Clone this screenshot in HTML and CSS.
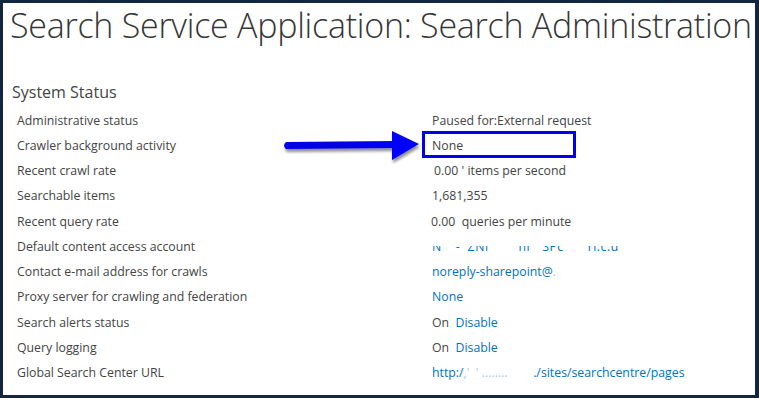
FILE: index.html
```html
<!DOCTYPE html>
<html>
<head>
<meta charset="utf-8">
<link rel="stylesheet" href="styles.css">
</head>
<body>
<div class="frame">
  <h1 class="title">Search Service Application: Search Administration</h1>
  <h2 class="section">System Status</h2>
  <div class="status">
    <div class="label">Administrative status</div>
    <div class="value">Paused for:External request</div>
    <div class="label">Crawler background activity</div>
    <div class="value">None</div>
    <div class="label">Recent crawl rate</div>
    <div class="value shift">0.00 ' items per second</div>
    <div class="label">Searchable items</div>
    <div class="value">1,681,355</div>
    <div class="label">Recent query rate</div>
    <div class="value back">0.00&nbsp; queries per minute</div>
    <div class="label">Default content access account</div>
    <div class="value"><span class="link redacted">N<span class="gap"></span>-&nbsp;&nbsp;ZNi<span class="gap2"></span>ni<span class="gap3"></span>SPc<span class="gap4"></span>rl.c.d</span></div>
    <div class="label">Contact e-mail address for crawls</div>
    <div class="value"><a class="link">noreply-sharepoint@</a><span class="faint">.</span></div>
    <div class="label">Proxy server for crawling and federation</div>
    <div class="value"><a class="link">None</a></div>
    <div class="label">Search alerts status</div>
    <div class="value">On&nbsp; <a class="link">Disable</a></div>
    <div class="label">Query logging</div>
    <div class="value">On&nbsp; <a class="link">Disable</a></div>
    <div class="label">Global Search Center URL</div>
    <div class="value"><a class="link">http:/<span class="faint">,' &nbsp;' ........ &nbsp;&nbsp;&nbsp;&nbsp;&nbsp;&nbsp;&nbsp;</span>./sites/searchcentre/pages</a></div>
  </div>
  <div class="highlight-box"></div>
  <svg class="arrow" width="145" height="36" viewBox="0 0 145 36">
    <defs>
      <linearGradient id="shaft" x1="0" y1="0" x2="1" y2="0">
        <stop offset="0" stop-color="#0000e6"/>
        <stop offset="0.5" stop-color="#0000e0"/>
        <stop offset="1" stop-color="#0000ff"/>
      </linearGradient>
      <filter id="sh" x="-10%" y="-30%" width="130%" height="170%">
        <feGaussianBlur in="SourceAlpha" stdDeviation="1.6"/>
        <feOffset dx="1" dy="3"/>
        <feComponentTransfer><feFuncA type="linear" slope="0.45"/></feComponentTransfer>
        <feMerge><feMergeNode/><feMergeNode in="SourceGraphic"/></feMerge>
      </filter>
    </defs>
    <g filter="url(#sh)">
      <path d="M5 13 L113 12 L113 19 L5 20 Q1 16.5 5 13 Z" fill="url(#shaft)"/>
      <polygon points="111,2 138,15 111,31" fill="#0000ff"/>
    </g>
  </svg>
</div>
</body>
</html>
```

FILE: styles.css
```css
html, body {
  margin: 0;
  padding: 0;
  background: #ffffff;
}

.frame {
  position: relative;
  box-sizing: border-box;
  width: 759px;
  height: 398px;
  border-style: solid;
  border-color: #12263f;
  border-width: 3px 4px 3px 3px;
  background: #ffffff;
  font-family: "Open Sans", "Noto Sans", sans-serif;
  color: #444444;
  overflow: hidden;
}

.title {
  margin: 0;
  padding: 2px 0 0 7px;
  font-size: 34px;
  line-height: 40px;
  font-weight: 300;
  color: #363636;
  white-space: nowrap;
  letter-spacing: -0.26px;
}

.section {
  margin: 36px 0 0 9px;
  font-size: 16px;
  line-height: 22px;
  font-weight: 400;
  color: #444444;
}

.status {
  display: grid;
  grid-template-columns: 415px auto;
  grid-auto-rows: 25.25px;
  align-items: center;
  margin: 5px 0 0 14px;
  font-size: 12.3px;
  line-height: 18px;
}

.label, .value {
  white-space: nowrap;
}

.shift { padding-left: 2px; }
.back { margin-left: -1px; }

.link {
  color: #0072c6;
  text-decoration: none;
}

.faint {
  color: #a9cbe9;
}

.redacted {
  display: inline-block;
  clip-path: inset(45% 0 0 0);
  letter-spacing: 0.5px;
}

.gap { display: inline-block; width: 14px; }
.gap2 { display: inline-block; width: 30px; }
.gap3 { display: inline-block; width: 12px; }
.gap4 { display: inline-block; width: 24px; }

.highlight-box {
  position: absolute;
  left: 419px;
  top: 128px;
  width: 148px;
  height: 21px;
  border: 3px solid #0000f0;
}

.arrow {
  position: absolute;
  left: 278px;
  top: 126px;
}
```
